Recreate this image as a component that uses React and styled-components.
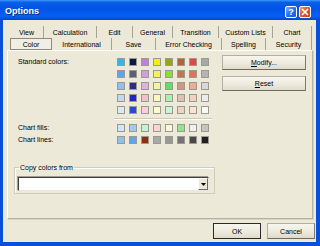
import React from "react";
import styled, { createGlobalStyle } from "styled-components";

const Global = createGlobalStyle`
  html, body { margin: 0; padding: 0; background: #ffffff; }
  body { font-family: "Liberation Sans", Arial, sans-serif; }
  * { box-sizing: border-box; }
`;

const Window = styled.div`
  width: 320px;
  height: 246px;
  display: flex;
  flex-direction: column;
  background: #0a4fd8;
  overflow: hidden;
`;

const TitleBar = styled.div`
  height: 20px;
  flex: none;
  display: flex;
  align-items: center;
  padding: 0 9px 0 5px;
  background: linear-gradient(
    to bottom,
    #3d95ff 0%,
    #0a5fe6 12%,
    #0053e6 45%,
    #0660f4 80%,
    #0452dd 92%,
    #0841c6 100%
  );
`;

const Title = styled.span`
  flex: 1;
  color: #ffffff;
  font: bold 9px "Liberation Sans", Arial, sans-serif;
  text-shadow: 1px 1px 0 #0a2a8a;
  margin-top: 1px;
`;

const CaptionButton = styled.div`
  width: 12px;
  height: 12px;
  margin-left: 2px;
  margin-top: 3px;
  border: 1px solid #ffffff;
  border-radius: 2px;
  display: flex;
  align-items: center;
  justify-content: center;
  color: #ffffff;
  font: bold 9px "Liberation Sans", Arial, sans-serif;
  background: ${(p) =>
    p.$close
      ? "linear-gradient(135deg, #f09a7a 0%, #e2582e 45%, #c8401c 100%)"
      : "linear-gradient(135deg, #7fb0ff 0%, #2d6ff0 50%, #1c56d8 100%)"};
`;

const Frame = styled.div`
  flex: 1;
  display: flex;
  flex-direction: column;
  margin: 0 4px 4px 3px;
  background: #ece9d8;
  padding-top: 6px;
`;

const TabRow = styled.div`
  height: 12px;
  display: flex;
  margin-left: ${(p) => p.$left}px;
`;

const Tab = styled.div`
  width: ${(p) => p.$w}px;
  height: 12px;
  display: flex;
  align-items: center;
  justify-content: center;
  font-size: 7px;
  color: #000;
  white-space: nowrap;
  border-right: 1px solid #a5a293;
  ${(p) =>
    p.$active &&
    `
    border: 1px solid #8c8a7c;
    margin-left: 1px;
    background: #f1efe4;
  `}
`;

const Panel = styled.div`
  height: 169px;
  margin-left: 4px;
  width: 306px;
  border: 1px solid #b5b2a2;
  border-top-color: #ffffff;
  border-left-color: #ffffff;
  box-shadow: 1px 1px 0 #d7d4c4;
  display: grid;
  grid-template-columns: 201px 84px;
  column-gap: 7px;
  align-content: start;
  padding: 3px 6px 0 6px;
`;

const PaletteGrid = styled.div`
  display: grid;
  grid-template-columns: 95px repeat(8, 8px);
  grid-template-rows: repeat(5, 8px) 2px repeat(2, 8px);
  column-gap: 4px;
  row-gap: 4px;
  padding: 4px 0 0 4px;
`;

const Label = styled.div`
  grid-column: 1;
  font-size: 7px;
  line-height: 8px;
  white-space: nowrap;
  color: #000;
`;

const Swatch = styled.div`
  width: 8px;
  height: 8px;
  border: 1px solid #9c9a90;
  background: ${(p) => p.$c};
`;

const Separator = styled.div`
  grid-column: 2 / -1;
  height: 2px;
  margin: 0 -3px;
  border-top: 1px solid #cbc8b8;
  border-bottom: 1px solid #ffffff;
`;

const ButtonCol = styled.div`
  display: flex;
  flex-direction: column;
  gap: 6px;
  padding-top: 1px;
`;

const Button = styled.div`
  width: ${(p) => p.$w || 84}px;
  height: ${(p) => p.$h || 15}px;
  display: flex;
  align-items: center;
  justify-content: center;
  font-size: 7px;
  color: #000;
  background: linear-gradient(to bottom, #f7f6ef 0%, #ece9dc 60%, #dedbcb 100%);
  border: 1px solid ${(p) => (p.$default ? "#2b2b2b" : "#b3b0a1")};
  border-right-color: ${(p) => (p.$default ? "#2b2b2b" : "#7d7b70")};
  border-bottom-color: ${(p) => (p.$default ? "#2b2b2b" : "#6e6c62")};
  u { text-decoration: underline; }
`;

const GroupBox = styled.fieldset`
  grid-column: 1;
  margin: 20px 0 0 0;
  padding: 6px 5px 1px 3px;
  border: 1px solid #d0cdbd;
  box-shadow: inset 1px 1px 0 #ffffff;
  height: 30px;
`;

const Legend = styled.legend`
  font-size: 7px;
  padding: 0 1px;
  margin-left: 1px;
  color: #000;
`;

const Combo = styled.div`
  height: 14px;
  display: flex;
  justify-content: flex-end;
  align-items: stretch;
  background: #ffffff;
  border: 1px solid;
  border-color: #3c3c3c #e8e8e0 #e8e8e0 #3c3c3c;
  box-shadow: -1px -1px 0 #a19e90;
`;

const DropButton = styled.div`
  width: 10px;
  display: flex;
  align-items: center;
  justify-content: center;
  background: #ece9d8;
  border: 1px solid;
  border-color: #ffffff #6f6d63 #6f6d63 #ffffff;
`;

const Footer = styled.div`
  display: flex;
  justify-content: flex-end;
  gap: 6px;
  margin-top: 4px;
  padding-right: 1px;
`;

const row1 = [
  ["View", 34],
  ["Calculation", 53],
  ["Edit", 36],
  ["General", 40],
  ["Transition", 46],
  ["Custom Lists", 54],
  ["Chart", 39],
];

const row2 = [
  ["Color", 42, true],
  ["International", 60],
  ["Save", 44],
  ["Error Checking", 66],
  ["Spelling", 44],
  ["Security", 46],
];

const standard = [
  ["#33b4ec", "#0a1a40", "#c080d8", "#f0f010", "#90a818", "#a8683c", "#e04848", "#a8a8a8"],
  ["#5ca4ec", "#5c5c7c", "#d0a0d0", "#f0f060", "#88e030", "#c07850", "#e07060", "#b4b4b4"],
  ["#90c0ec", "#2c2c80", "#e0b0e0", "#f4f4a0", "#60e060", "#d09880", "#ecac98", "#d8d8d8"],
  ["#c0d8f0", "#2424c0", "#f0c0d0", "#f8f8c0", "#a8f0b0", "#e0c0b0", "#f4d0c0", "#ececec"],
  ["#dce8f8", "#2448e0", "#f8d0dc", "#fcfcd0", "#c8f4d8", "#ecd4c4", "#f8e4d4", "#fafafa"],
];

const fills = ["#d4e4f8", "#a4c8f0", "#c4f0d4", "#f8d4d8", "#f8f8d4", "#90e490", "#f0f0f0", "#c4c4c4"];
const lines = ["#90c0ec", "#60a4ec", "#8c3010", "#a8a8a8", "#989898", "#747474", "#484848", "#202020"];

export default function App() {
  return (
    <>
      <Global />
      <Window>
        <TitleBar>
          <Title>Options</Title>
          <CaptionButton>?</CaptionButton>
          <CaptionButton $close>
            <svg width="8" height="8" viewBox="0 0 8 8">
              <path d="M1 1 L7 7 M7 1 L1 7" stroke="#fff" strokeWidth="1.6" />
            </svg>
          </CaptionButton>
        </TitleBar>
        <Frame>
          <TabRow $left={7}>
            {row1.map(([t, w]) => (
              <Tab key={t} $w={w}>{t}</Tab>
            ))}
          </TabRow>
          <TabRow $left={6}>
            {row2.map(([t, w, a]) => (
              <Tab key={t} $w={w} $active={a}>{t}</Tab>
            ))}
          </TabRow>
          <Panel>
            <div>
              <PaletteGrid>
                {standard.map((r, i) => (
                  <React.Fragment key={i}>
                    <Label>{i === 0 ? "Standard colors:" : ""}</Label>
                    {r.map((c, j) => (
                      <Swatch key={j} $c={c} />
                    ))}
                  </React.Fragment>
                ))}
                <Label />
                <Separator />
                <Label>Chart fills:</Label>
                {fills.map((c, j) => (
                  <Swatch key={j} $c={c} />
                ))}
                <Label>Chart lines:</Label>
                {lines.map((c, j) => (
                  <Swatch key={j} $c={c} />
                ))}
              </PaletteGrid>
            </div>
            <ButtonCol>
              <Button>
                <span><u>M</u>odify...</span>
              </Button>
              <Button>
                <span><u>R</u>eset</span>
              </Button>
            </ButtonCol>
            <GroupBox>
              <Legend>Copy colors from</Legend>
              <Combo>
                <DropButton>
                  <svg width="5" height="3" viewBox="0 0 5 3">
                    <path d="M0 0 H5 L2.5 3 Z" fill="#000" />
                  </svg>
                </DropButton>
              </Combo>
            </GroupBox>
          </Panel>
          <Footer>
            <Button $w={48} $h={16} $default>OK</Button>
            <Button $w={48} $h={16}>Cancel</Button>
          </Footer>
        </Frame>
      </Window>
    </>
  );
}
